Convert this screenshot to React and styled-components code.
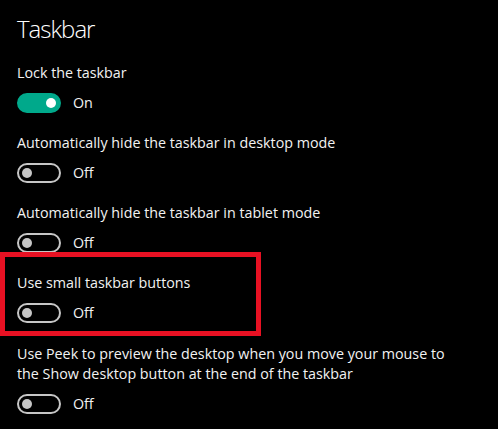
import React from 'react';
import styled, { createGlobalStyle } from 'styled-components';

const settings = [
    { label: 'Lock the taskbar', on: true },
    { label: 'Automatically hide the taskbar in desktop mode', on: false },
    { label: 'Automatically hide the taskbar in tablet mode', on: false },
    { label: 'Use small taskbar buttons', on: false, highlight: true },
    {
        label: 'Use Peek to preview the desktop when you move your mouse to the Show desktop button at the end of the taskbar',
        on: false,
    },
];

function Setting({ label, on, space }) {
    return (
        <Item $space={space}>
            <Label>{label}</Label>
            <ToggleRow>
                <Switch $on={on}>
                    <Knob $on={on} />
                </Switch>
                <State>{on ? 'On' : 'Off'}</State>
            </ToggleRow>
        </Item>
    );
}

function App() {
    return (
        <Page>
            <GlobalStyle />
            <Title>Taskbar</Title>
            <List>
                {settings.map((s, i) => {
                    const nextHighlighted = settings[i + 1] && settings[i + 1].highlight;
                    if (s.highlight) {
                        return (
                            <Highlight key={i}>
                                <Setting label={s.label} on={s.on} space={0} />
                            </Highlight>
                        );
                    }
                    return <Setting key={i} label={s.label} on={s.on} space={nextHighlighted ? 0 : 20} />;
                })}
            </List>
        </Page>
    );
}

export default App;

const GlobalStyle = createGlobalStyle`
    html, body {
        margin: 0;
        padding: 0;
        background: #000;
    }
    body {
        font-family: "Open Sans", "Noto Sans", sans-serif;
        color: #fff;
    }
`
const Page = styled.div`
    width: 498px;
    height: 429px;
    box-sizing: border-box;
    padding: 13px 0 0 17px;
    background: #000;
    overflow: hidden;
`
const Title = styled.h1`
    margin: 0 0 18px;
    font-size: 24px;
    font-weight: 300;
    line-height: 32px;
    color: #fff;
    letter-spacing: -1px;
`
const List = styled.div`
    display: flex;
    flex-direction: column;
`
const Item = styled.div`
    display: flex;
    flex-direction: column;
    gap: 10px;
    margin-bottom: ${p => p.$space}px;
`
const Label = styled.div`
    font-size: 14.3px;
    line-height: 20px;
    color: #f2f2f2;
    max-width: 440px;
`
const ToggleRow = styled.div`
    display: flex;
    align-items: center;
    gap: 12px;
    height: 20px;
`
const Switch = styled.div`
    box-sizing: border-box;
    width: 44px;
    height: 20px;
    border-radius: 10px;
    border: 2px solid ${p => (p.$on ? '#00a98b' : '#c6c6c6')};
    background: ${p => (p.$on ? '#00a98b' : 'transparent')};
    display: flex;
    align-items: center;
    justify-content: ${p => (p.$on ? 'flex-end' : 'flex-start')};
    padding: 0 3px;
`
const Knob = styled.span`
    width: 10px;
    height: 10px;
    border-radius: 50%;
    background: ${p => (p.$on ? '#fff' : '#c6c6c6')};
`
const State = styled.span`
    font-size: 14.3px;
    line-height: 20px;
    color: #f2f2f2;
`
const Highlight = styled.div`
    width: 261px;
    box-sizing: border-box;
    margin: -1px 0 8px -17px;
    padding: 16px 12px 8px;
    border: 5px solid #e81123;
`
